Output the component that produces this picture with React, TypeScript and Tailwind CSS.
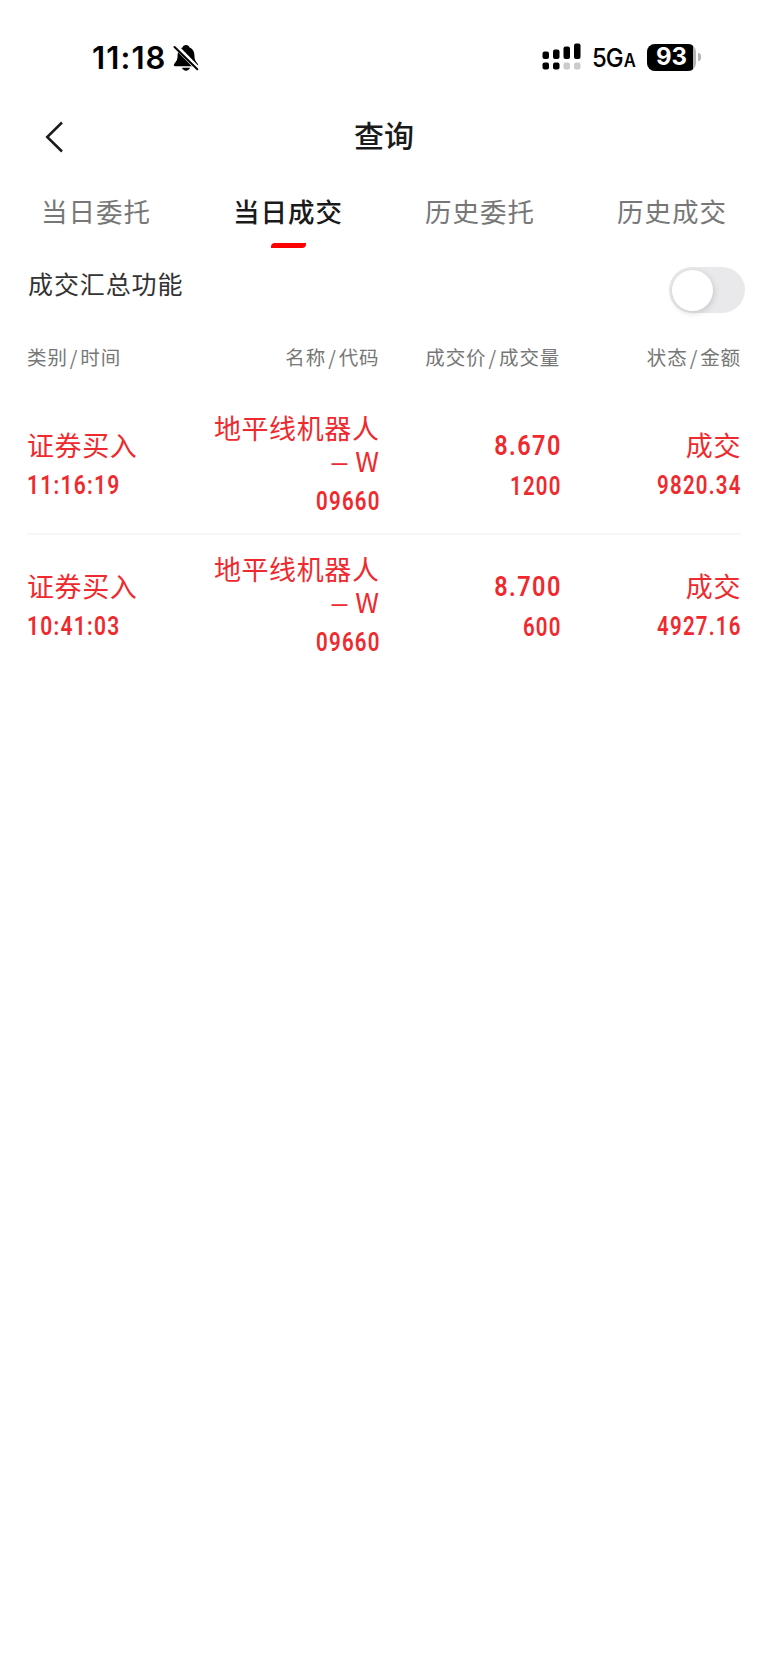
import type { ReactNode } from "react";

const tabs = ["当日委托", "当日成交", "历史委托", "历史成交"];

const deals = [
  { type: "证券买入", time: "11:16:19", name: "地平线机器人", code: "09660", price: "8.670", volume: "1200", status: "成交", amount: "9820.34" },
  { type: "证券买入", time: "10:41:03", name: "地平线机器人", code: "09660", price: "8.700", volume: "600", status: "成交", amount: "4927.16" },
];

function Bell() {
  return (
    <svg viewBox="0 0 26 28" className="ml-[6px] mt-[1px] h-[28px] w-[26px]">
      <path d="M13 1c-2 0-3 1-3.300 2.200C6.500 4.500 4.600 7.500 4.600 11c0 5-1.400 6.500-3.300 8.700-1 1.300-.4 2.500 1 2.500h21.400c1.400 0 2-1.200 1-2.500-1.900-2.200-3.300-3.700-3.300-8.700 0-3.500-1.900-6.500-5.100-7.800C16 2 15 1 13 1z" fill="#000" />
      <path d="M9 23.800h8c-.6 1.700-2 2.900-4 2.900s-3.400-1.200-4-2.900z" fill="#000" />
      <path d="M2 1.500 25 25" stroke="#fff" strokeWidth="5" />
      <path d="M1.500 3 24.300 25.300" stroke="#000" strokeWidth="2" strokeLinecap="round" />
    </svg>
  );
}

function Signal() {
  return (
    <svg viewBox="0 0 40 28" className="h-[28px] w-[40px]">
      <rect x="0.500" y="8.500" width="6.500" height="7.500" rx="2" />
      <rect x="11" y="6.500" width="6.500" height="9.500" rx="2" />
      <rect x="21.500" y="3.500" width="6.500" height="12.500" rx="2" />
      <rect x="32" y="0.500" width="6.500" height="15.500" rx="2" />
      <rect x="0.500" y="19.500" width="6.500" height="7" rx="2" />
      <rect x="11" y="19.500" width="6.500" height="7" rx="2" />
      <rect x="21.500" y="19.500" width="6.500" height="7" rx="2" fill="#ccc" />
      <rect x="32" y="19.500" width="6.500" height="7" rx="2" fill="#ccc" />
    </svg>
  );
}

function StatusBar() {
  return (
    <div className="flex h-[100px] items-start justify-between pl-[92px] pr-[67px] pt-[42px] font-['Inter',sans-serif] text-black">
      <div className="flex h-[30px] items-center">
        <span className="mt-[1px] text-[31px] font-semibold leading-[30px] tracking-[1.100px]">11:18</span>
        <Bell />
      </div>
      <div className="flex h-[30px] items-center">
        <Signal />
        <span className="ml-[10px] mt-[5px] flex w-[44px] origin-left scale-x-[.92] items-baseline font-medium leading-[30px]">
          <span className="text-[26px] tracking-[-1px]">5G</span>
          <span className="ml-[1px] text-[18px] font-semibold">A</span>
        </span>
        <div className="ml-[11px] flex h-[27px] w-[49px] overflow-hidden rounded-[8px] bg-[#b5b5b5]">
          <div className="flex w-[46px] items-center justify-center bg-black pl-[3px] text-[24px] font-bold leading-none text-white">93</div>
        </div>
        <div className="ml-[2px] h-[8px] w-[3px] rounded-r-full bg-[#b5b5b5]" />
      </div>
    </div>
  );
}

function Num({ children, className = "" }: { children: ReactNode; className?: string }) {
  return (
    <span className={`block font-['Roboto',sans-serif] text-[25px] font-semibold leading-[33px] tracking-[1.500px] ${className}`}>
      {children}
    </span>
  );
}

function Heading({ left, right, className }: { left: string; right: string; className: string }) {
  return (
    <span className={className}>
      {left}
      <span className="mx-[2px]">/</span>
      {right}
    </span>
  );
}

function Deal({ deal }: { deal: (typeof deals)[number] }) {
  return (
    <div className="flex h-[141px] items-center border-b-2 border-[#f7f7f7] pt-[2px] text-[27px] leading-[33px] tracking-[0.600px] text-[#ee2a2f] last:border-transparent">
      <div className="w-[152px]">
        <div>{deal.type}</div>
        <Num className="mt-[8px] origin-left scale-x-[.84]">{deal.time}</Num>
      </div>
      <div className="w-[201px] text-right">
        <div>
          {deal.name}
          <br />
          <span className="mr-[4px] text-[22px] font-medium leading-none">－</span>W
        </div>
        <Num className="-mr-[1px] mt-[8px] origin-right scale-x-[.82]">{deal.code}</Num>
      </div>
      <div className="w-[181px] text-right">
        <span className="-mr-[1px] mt-[3px] block origin-right scale-x-[.84] font-['Roboto',sans-serif] text-[28px] font-semibold leading-[33px] tracking-[1.700px]">{deal.price}</span>
        <Num className="-mr-[1px] mt-[8px] origin-right scale-x-[.82]">{deal.volume}</Num>
      </div>
      <div className="w-[181px] text-right">
        <div>{deal.status}</div>
        <Num className="-mr-[1px] mt-[8px] origin-right scale-x-[.82]">{deal.amount}</Num>
      </div>
    </div>
  );
}

export default function App() {
  return (
    <div className="h-[1669px] w-[768px] bg-white font-['Noto_Sans_CJK_SC',sans-serif]">
      <StatusBar />

      <header className="grid h-[74px] grid-cols-[100px_1fr_100px] items-center text-[#1a1a1a]">
        <svg viewBox="0 0 18 32" className="ml-[45px] h-[32px] w-[18px]" fill="none" stroke="currentColor" strokeWidth="2.500">
          <path d="M17 1.500 2.200 16 17 30.500" />
        </svg>
        <h1 className="pb-[5px] text-center text-[30px] font-medium">查询</h1>
      </header>

      <nav className="grid h-[76px] grid-cols-4 text-[26.500px] tracking-[1px] text-[#777]">
        {tabs.map((tab) => (
          <button
            key={tab}
            className={tab === "当日成交" ? "flex flex-col items-center font-medium text-[#1a1a1a]" : "flex flex-col items-center"}
          >
            <span className="mt-[17px] leading-[40px]">{tab}</span>
            {tab === "当日成交" && <span className="mt-[12px] h-[5px] w-[35px] rounded-br-[4px] rounded-tl-[4px] bg-[#fe0000]" />}
          </button>
        ))}
      </nav>

      <div className="flex h-[80px] justify-between pl-[28px] pr-[23px]">
        <span className="mt-[15px] text-[25px] leading-[36px] tracking-[0.900px] text-[#333]">成交汇总功能</span>
        <button className="mt-[17px] flex h-[46px] w-[76px] rounded-full bg-[#e9e9eb] p-[2.500px]">
          <span className="h-[41px] w-[41px] rounded-full bg-white shadow-[1px_2px_6px_rgba(0,0,0,0.15)]" />
        </button>
      </div>

      <div className="mx-[27px] flex h-[64px] pt-[12px] text-[19.500px] leading-[30px] tracking-[0.900px] text-[#777]">
        <Heading left="类别" right="时间" className="w-[152px]" />
        <Heading left="名称" right="代码" className="w-[201px] text-right" />
        <Heading left="成交价" right="成交量" className="w-[181px] text-right" />
        <Heading left="状态" right="金额" className="w-[181px] text-right" />
      </div>

      <main className="mx-[27px]">
        {deals.map((deal) => (
          <Deal key={deal.time} deal={deal} />
        ))}
      </main>
    </div>
  );
}
